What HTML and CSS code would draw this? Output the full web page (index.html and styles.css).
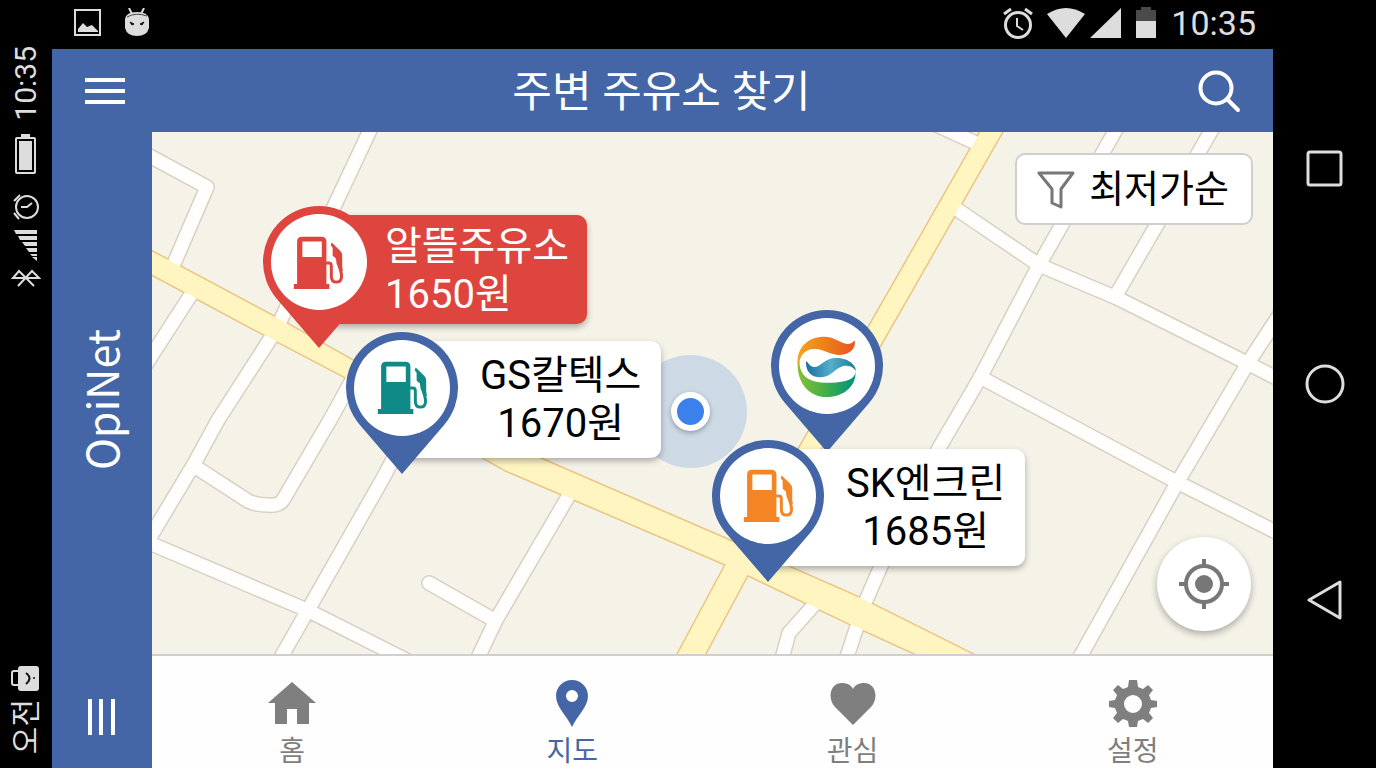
FILE: index.html
```html
<!DOCTYPE html>
<html lang="ko">
<head>
  <meta charset="UTF-8" />
  <meta name="viewport" content="width=device-width, initial-scale=1.0"/>
  <title>주변 주유소 찾기</title>
  <link rel="stylesheet" href="styles.css">
</head>
<body>
  <!-- shared shapes -->
  <svg class="defs" width="0" height="0" aria-hidden="true">
    <defs>
      <symbol id="pin" viewBox="0 0 114 144">
        <path d="M14.9 93.9A56 56 0 1 1 99.1 93.9L57 143Z" fill="currentColor"/>
        <circle cx="57" cy="57" r="48" fill="#fff"/>
      </symbol>
      <symbol id="pump" viewBox="0 0 154 164">
        <path fill="currentColor" fill-rule="evenodd" d="M12 146V17Q12 2 27 2H86Q101 2 101 17V146H110V161H2V146ZM28 17V64H87V17Z"/>
        <path fill="none" stroke="currentColor" stroke-width="9" d="M100 82H108Q116 82 116 91V122Q116 140 131 140Q147 140 147 122C147 104 139 98 138 76"/>
        <path fill="currentColor" d="M117 20L142 44Q149 50 149 60V92L151 106H142L132 84L130 68L120 60V36L114 28Z"/>
      </symbol>
    </defs>
  </svg>

  <div class="device">
    <aside class="rail">
      <div class="rail-group">
        <span class="rail-time">10:35</span>
        <svg width="30" height="54" viewBox="0 0 30 54">
          <rect x="5" y="11" width="19" height="35" rx="1" fill="none" stroke="#ddd" stroke-width="2"/>
          <path d="M10 7h9v4h-9zM8 14h13v29H8z" fill="#ddd"/>
        </svg>
        <svg width="30" height="35" viewBox="0 0 30 35" fill="none" stroke="#ddd" stroke-width="2">
          <circle cx="16" cy="20" r="11"/>
          <path d="M10 20h6l5-4M3 14l6-6M3 26l5 6"/>
        </svg>
        <svg width="30" height="34" viewBox="0 0 30 34" fill="#ddd">
          <path d="M3 2H26V6H5ZM7 8H26V12H9ZM11 14H26V18H14ZM15 20H26V24H18ZM19 26H26V28H21ZM21 29H26V33Z"/>
        </svg>
        <svg width="30" height="20" viewBox="0 0 30 20" fill="none" stroke="#ddd" stroke-width="2">
          <path d="M7 18L21 3L28 10H2L8 3L23 18"/>
        </svg>
      </div>
      <div class="rail-group">
        <svg width="30" height="28" viewBox="0 0 30 28">
          <path d="M8 6H3Q1 6 1 8V18Q1 20 3 20H8" fill="none" stroke="#ddd" stroke-width="2"/>
          <rect x="7" y="1" width="21" height="25" rx="3" fill="#ddd"/>
          <path d="M15 8Q22 13 15 19" fill="none" stroke="#111" stroke-width="2"/>
          <circle cx="23" cy="13" r="1" fill="#111"/>
        </svg>
        <span class="rail-ampm">오전</span>
      </div>
    </aside>

    <div class="screen">
      <div class="status">
        <svg width="28" height="30" viewBox="0 0 28 30">
          <rect x="1" y="2" width="25" height="25" fill="none" stroke="#ddd" stroke-width="2"/>
          <path d="M4 24V21L9 15L13 19L18 17L24 23V24Z" fill="#ddd"/>
        </svg>
        <svg width="26" height="30" viewBox="0 0 26 30">
          <path d="M5 0L8 6M20 0L17 6" stroke="#ddd" stroke-width="2"/>
          <path d="M1 11Q2 4 13 4Q24 4 25 11V20Q23 28 13 28Q3 28 1 20Z" fill="#ddd"/>
          <path d="M3 9Q12 4 23 8" fill="none" stroke="#444"/>
          <path d="M6 14L10 16L8 17ZM20 14L16 16L18 17Z" fill="#111" stroke="#111"/>
        </svg>
        <div class="status-right">
          <svg width="30" height="32" viewBox="0 0 30 32" fill="none" stroke="#ddd" stroke-width="3">
            <circle cx="15" cy="18" r="12.500"/>
            <path d="M1 7L8 2M22 2L29 7"/>
            <path d="M14 11V19L20 23" stroke-width="2"/>
          </svg>
          <svg width="75" height="32" viewBox="0 0 75 32" fill="#ddd">
            <path d="M0 7Q19-5 38 7L19 31ZM43 31L74 1V31Z"/>
          </svg>
          <svg class="battery" width="21" height="32" viewBox="0 0 21 32">
            <path d="M0 3H5V0H15V3H20V15H0Z" fill="#4a4a4a"/>
            <path d="M0 14H20V31H0Z" fill="#ddd"/>
          </svg>
          <span class="status-time">10:35</span>
        </div>
      </div>

      <header class="topbar">
        <button class="icon-btn" aria-label="메뉴">
          <svg width="42" height="42" viewBox="0 0 42 42" fill="#fff"><path d="M1 7h40v4H1zM1 18h40v4H1zM1 29h40v4H1z"/></svg>
        </button>
        <h1>주변 주유소 찾기</h1>
        <button class="icon-btn" aria-label="검색">
          <svg width="44" height="44" viewBox="0 0 44 44" fill="none" stroke="#fff" stroke-width="4" stroke-linecap="round">
            <circle cx="19" cy="18" r="15.500"/><path d="M30 29L41 40"/>
          </svg>
        </button>
      </header>

      <div class="content">
        <div class="sidebar">
          <span class="brand">OpiNet</span>
          <button class="icon-btn" aria-label="목록">
            <svg width="28" height="38" viewBox="0 0 28 38" fill="#fff"><path d="M0 1h4v36H0zM11 1h4v36h-4zM23 1h4v36h-4z"/></svg>
          </button>
        </div>

        <div class="main">
          <div class="map">
            <svg class="map-base" viewBox="152 132 1121 522" preserveAspectRatio="xMidYMid slice" aria-hidden="true">
              <defs>
                <path id="streets" d="M140 151L207 187L173 266M194 290L152 355L140 374M372 126L276 330L218 420L194 464L146 544M194 466L248 501Q256 505 268 505Q279 506 283 500L330 420L362 362M410 428L382 480L308 610L276 666M140 539L307 610L420 667M572 490L496 620L474 666M429 583L494 620M930 122L978 144M952 206L1039 265L1117 298L1247 363L1290 385M1118 126L1039 265L980 378L939 448L881 566L864 605L844 666M1214 126L1115 297M1290 299L1248 363L1177 483L1075 666M980 377L1173 480L1290 539M822 596L789 633L780 666"/>
                <path id="avenue" d="M140 245L286 323L352 360L539 458L710 532L860 598L970 653L1000 668V690H940V665L850 624L727 565L566 496L505 470L484 458L345 377L265 335L140 268Z"/>
                <path id="avenue-north" d="M1006 106L901 290L808 452L745 565"/>
                <path id="avenue-south" d="M745 554L684 668"/>
              </defs>
              <rect x="152" y="132" width="1121" height="522" fill="#f5f2e8"/>
              <g fill="none" stroke-linejoin="round">
                <use href="#streets" stroke="#d9d0c4" stroke-width="16" stroke-linecap="round"/>
                <use href="#avenue" stroke="#ecc582" stroke-width="3"/>
                <use href="#avenue-north" stroke="#ecc582" stroke-width="22"/>
                <use href="#avenue-south" stroke="#ecc582" stroke-width="27"/>
                <use href="#streets" stroke="#fffefc" stroke-width="13" stroke-linecap="round"/>
                <use href="#avenue" fill="#fef5c0"/>
                <use href="#avenue-north" stroke="#fef5c0" stroke-width="19"/>
                <use href="#avenue-south" stroke="#fef5c0" stroke-width="24"/>
              </g>
            </svg>

            <div class="here"></div>

            <div class="station s-oil">
              <svg class="pin" viewBox="0 0 114 144"><use href="#pin"/><use class="pump" href="#pump" x="31" y="31" width="51" height="54"/></svg>
              <div class="card">알뜰주유소<br>1650원</div>
            </div>

            <div class="station s-gs">
              <svg class="pin" viewBox="0 0 114 144"><use href="#pin"/><use class="pump" href="#pump" x="32" y="30" width="51" height="54"/></svg>
              <div class="card">GS칼텍스<br>1670원</div>
            </div>

            <div class="station s-logo">
              <svg class="pin" viewBox="0 0 114 144">
                <defs>
                  <linearGradient id="sun"><stop offset="0" stop-color="#f2a51e"/><stop offset="1" stop-color="#e8571b"/></linearGradient>
                  <linearGradient id="sea"><stop offset="0" stop-color="#1b6fa0"/><stop offset=".5" stop-color="#55aecb"/><stop offset="1" stop-color="#1a7c9f"/></linearGradient>
                  <linearGradient id="leaf"><stop offset="0" stop-color="#8abf32"/><stop offset=".5" stop-color="#3fae49"/><stop offset="1" stop-color="#00907f"/></linearGradient>
                </defs>
                <use href="#pin"/>
                <g transform="translate(1 1) scale(.3333) translate(-393 -60)">
                  <path fill="url(#leaf)" d="M473 215C470 280 508 321 560 321C610 321 649 290 647 243C646 268 620 277 572 278C506 280 480 258 478 215Z"/>
                  <path fill="url(#sun)" d="M473 223C468 170 508 140 552 140C585 140 602 160 622 162C633 162 639 158 644 151C649 172 632 195 600 195C570 195 552 178 525 177C500 176 479 192 478 223Z"/>
                  <path fill="url(#sea)" d="M498 213C496 245 515 263 542 262C576 261 582 235 610 228C625 225 640 230 647 243C650 225 622 202 585 204C550 206 545 231 522 231C510 230 505 218 498 213Z"/>
                </g>
              </svg>
            </div>

            <div class="station s-sk">
              <svg class="pin" viewBox="0 0 114 144"><use href="#pin"/><use class="pump" href="#pump" x="32" y="30" width="51" height="54"/></svg>
              <div class="card">SK엔크린<br>1685원</div>
            </div>

            <button class="filter">
              <svg width="38" height="40" viewBox="0 0 38 40" fill="none" stroke="#777" stroke-width="3" stroke-linejoin="round">
                <path d="M2 3H36L24 19V37L15 33V19Z"/>
              </svg>
              최저가순
            </button>

            <button class="locate" aria-label="현재 위치">
              <svg width="52" height="52" viewBox="0 0 52 52" fill="none" stroke="#777" stroke-width="4">
                <circle cx="26" cy="26" r="18"/>
                <path d="M26 1V8M26 44V51M1 26H8M44 26H51"/>
                <circle cx="26" cy="26" r="9" fill="#777" stroke="none"/>
              </svg>
            </button>
          </div>

          <nav class="tabs">
            <a href="#home">
              <svg width="48" height="48" viewBox="0 0 48 48" fill="currentColor"><path d="M24 2L48 23H41V44H29V29H19V44H7V23H0Z"/></svg>
              홈
            </a>
            <a href="#map" class="active">
              <svg width="48" height="48" viewBox="0 0 48 48" fill="currentColor"><path fill-rule="evenodd" d="M24 0C15 0 8 7 8 16C8 27 19 36 24 47C29 36 40 27 40 16C40 7 33 0 24 0ZM24 10A6 6 0 1 1 24 22A6 6 0 1 1 24 10Z"/></svg>
              지도
            </a>
            <a href="#favorite">
              <svg width="48" height="48" viewBox="0 0 48 48" fill="currentColor"><path d="M24 45L6 27C-2 18 1 3 13 3C18 3 22 5 24 9C26 5 30 3 35 3C47 3 50 18 42 27Z"/></svg>
              관심
            </a>
            <a href="#settings">
              <svg width="48" height="48" viewBox="0 0 48 48" fill="currentColor">
                <path fill-rule="evenodd" d="M20 0H28L29 7L34 9L39 5L44 10L40 15L42 20L48 21V27L42 28L40 33L44 38L39 43L34 39L29 41L28 47H20L19 41L14 39L9 43L4 38L8 33L6 28L0 27V21L6 20L8 15L4 10L9 5L14 9L19 7ZM24 15A9 9 0 1 0 24 33A9 9 0 1 0 24 15Z"/>
              </svg>
              설정
            </a>
          </nav>
        </div>
      </div>
    </div>

    <div class="softkeys">
      <button class="icon-btn" aria-label="최근 앱">
        <svg width="40" height="40" viewBox="0 0 40 40" fill="none" stroke="#ddd" stroke-width="3"><rect x="3" y="4" width="33" height="33" rx="2"/></svg>
      </button>
      <button class="icon-btn" aria-label="홈 화면">
        <svg width="40" height="40" viewBox="0 0 40 40" fill="none" stroke="#ddd" stroke-width="3"><circle cx="20" cy="20" r="18"/></svg>
      </button>
      <button class="icon-btn" aria-label="뒤로">
        <svg width="40" height="40" viewBox="0 0 40 40" fill="none" stroke="#ddd" stroke-width="3" stroke-linejoin="round"><path d="M4 20L35 2V38Z"/></svg>
      </button>
    </div>
  </div>
</body>
</html>
```
FILE: styles.css
```css
* {
  box-sizing: border-box;
}

body {
  margin: 0;
  background: #000;
  font-family: Roboto, 'Noto Sans CJK KR', sans-serif;
}

svg {
  display: block;
  flex: none;
}

.defs {
  position: absolute;
}

button {
  border: none;
  background: none;
  font-family: inherit;
  cursor: pointer;
}

.icon-btn {
  padding: 0;
}

.device {
  display: flex;
  height: 100vh;
}

/* left system rail */
.rail {
  width: 52px;
  display: flex;
  flex-direction: column;
  justify-content: space-between;
  padding: 46px 0 14px;
  color: #ddd;
}

.rail-group {
  display: flex;
  flex-direction: column;
  align-items: center;
  gap: 6px;
}

.rail-time, .rail-ampm, .brand {
  writing-mode: vertical-rl;
  text-orientation: sideways;
  transform: rotate(180deg);
}

.rail-time, .rail-ampm {
  font-size: 30px;
  line-height: 52px;
}

.screen {
  flex: 1;
  min-width: 0;
  display: flex;
  flex-direction: column;
}

.status {
  height: 49px;
  display: flex;
  align-items: center;
  gap: 22px;
  padding: 0 17px 3px 22px;
  color: #ddd;
}

.status-right {
  margin-left: auto;
  display: flex;
  align-items: center;
  gap: 14px;
}

.status-time {
  font-size: 34px;
  line-height: 40px;
}

.topbar {
  height: 83px;
  display: flex;
  align-items: center;
  justify-content: space-between;
  padding: 2px 32px 0;
  background: #4466a6;
}

h1 {
  margin: 0;
  color: #fff;
  font-size: 43px;
  font-weight: 400;
  line-height: 60px;
}

.content {
  flex: 1;
  min-height: 0;
  display: flex;
}

.sidebar {
  width: 100px;
  display: flex;
  flex-direction: column;
  align-items: center;
  justify-content: space-between;
  padding: 197px 0 32px;
  background: #4466a6;
}

.brand {
  padding-left: 5px;
  color: #fff;
  font-family: 'Noto Sans CJK KR', sans-serif;
  font-size: 43px;
  line-height: 60px;
}

.main {
  flex: 1;
  min-width: 0;
  display: flex;
  flex-direction: column;
}

/* map */
.map {
  position: relative;
  flex: 1;
  min-height: 0;
  overflow: hidden;
}

.map-base {
  width: 100%;
  height: 100%;
}

.here {
  position: absolute;
  left: 482px;
  top: 223px;
  width: 113px;
  height: 113px;
  border-radius: 50%;
  background: #cddae6;
}

.here::after {
  content: '';
  position: absolute;
  inset: 37px;
  border: 6px solid #fff;
  border-radius: 50%;
  background: #3c80ec;
  box-shadow: 0 2px 5px rgba(0, 0, 0, 0.3);
}

.station {
  position: absolute;
  isolation: isolate;
  display: flex;
  align-items: flex-start;
  color: #4466a6;
}

.pin {
  position: relative;
  z-index: 1;
  width: 114px;
  height: 144px;
}

.card {
  margin: 10px 0 0 -57px;
  padding: 11px 20px 10px 78px;
  border-radius: 10px;
  background: #fff;
  box-shadow: 0 3px 6px rgba(0, 0, 0, 0.3);
  color: #000;
  font-size: 40px;
  line-height: 48px;
  text-align: center;
  white-space: nowrap;
}

.s-oil {
  left: 110px;
  top: 73px;
  color: #de453e;
}

.s-oil .card {
  padding: 8px 18px 5px 66px;
  background: #de453e;
  color: #fff;
  text-align: left;
}

.s-gs {
  left: 193px;
  top: 199px;
}

.s-gs .pump {
  color: #0f8a87;
}

.s-logo {
  left: 618px;
  top: 177px;
}

.s-sk {
  left: 559px;
  top: 307px;
}

.s-sk .pump {
  color: #f58524;
}

.filter {
  position: absolute;
  top: 21px;
  right: 20px;
  display: flex;
  align-items: center;
  gap: 14px;
  padding: 7px 22px 6px 20px;
  border: 2px solid #cfcfcf;
  border-radius: 10px;
  background: #fff;
  color: #000;
  font-size: 38px;
  line-height: 55px;
}

.locate {
  position: absolute;
  right: 22px;
  bottom: 23px;
  width: 94px;
  height: 94px;
  display: flex;
  align-items: center;
  justify-content: center;
  border-radius: 50%;
  background: #fff;
  box-shadow: 0 3px 7px rgba(0, 0, 0, 0.3);
}

/* bottom tabs */
.tabs {
  height: 114px;
  display: flex;
  border-top: 2px solid #cfcfcf;
  background: #fefefe;
}

.tabs a {
  flex: 1;
  display: flex;
  flex-direction: column;
  align-items: center;
  padding-top: 24px;
  color: #7f7f7f;
  font-size: 28px;
  line-height: 48px;
  text-decoration: none;
}

.tabs .active {
  color: #4466a6;
}

/* android soft keys */
.softkeys {
  width: 103px;
  display: flex;
  flex-direction: column;
  align-items: center;
  justify-content: center;
  gap: 176px;
}
```
